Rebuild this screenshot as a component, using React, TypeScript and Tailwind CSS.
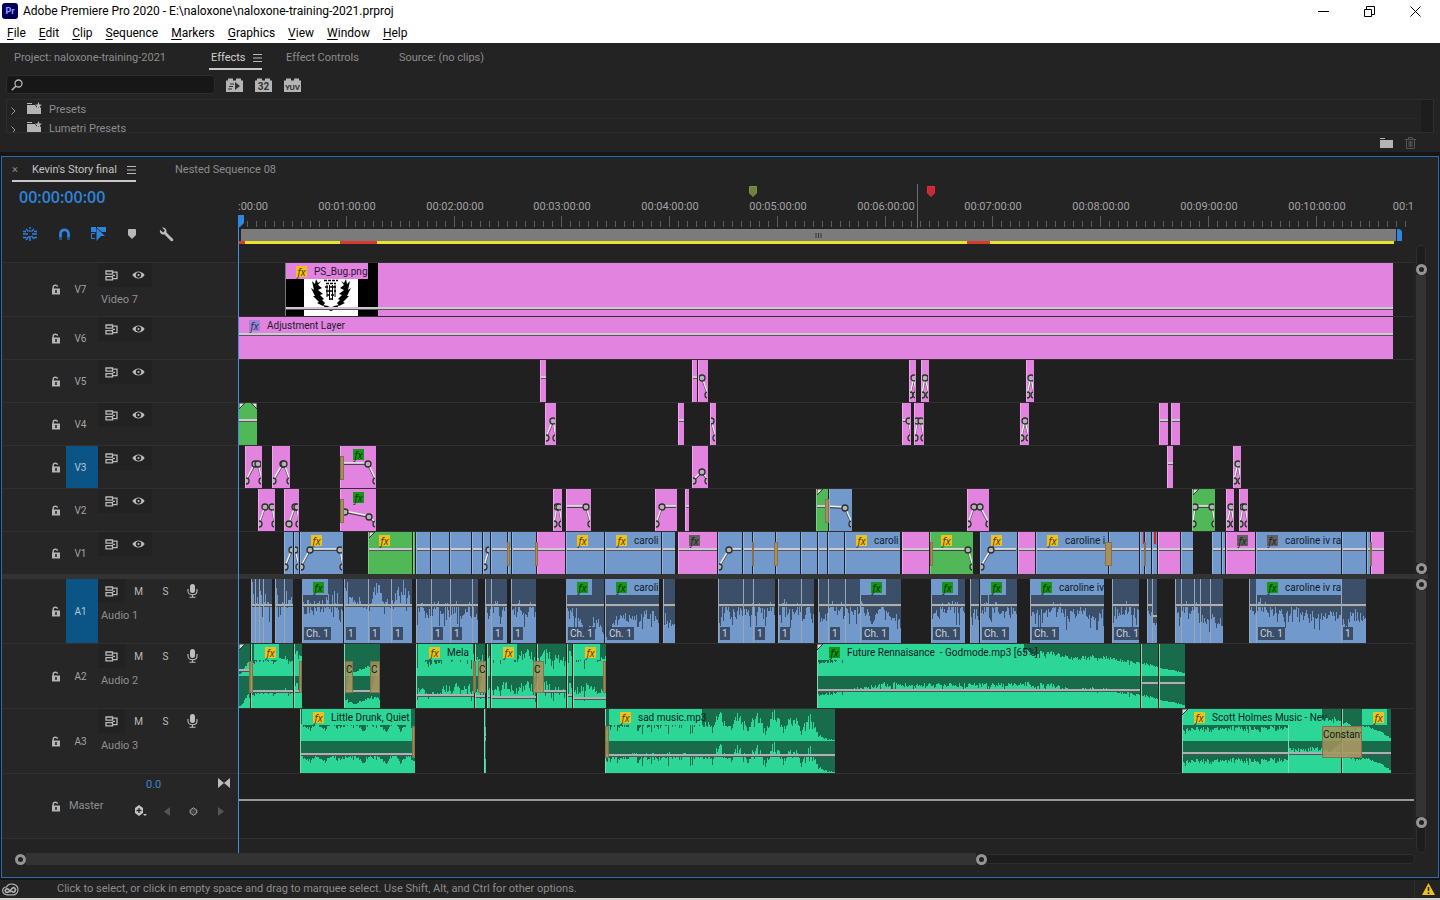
import { ReactNode } from 'react'
import clsx from 'clsx'

type Point = [number, number]
type FxKind = 'yellow' | 'green' | 'gray' | 'violet'
type ClipColor = 'pink' | 'blue' | 'green'

interface VideoClip {
  from: number
  to: number
  color?: ClipColor
  fx?: FxKind
  name?: string
  curve?: Point[]
  flat?: boolean
  line?: number
  corner?: boolean
  cornerEnd?: boolean
  afterTransition?: boolean
}

interface AudioClip {
  from: number
  to: number
  levels: number[]
  rough?: number
  fx?: FxKind
  name?: string
  header?: [number, number]
  badge?: string
  line?: number
  corner?: boolean
}

interface Transition {
  from: number
  to: number
  label?: string
}

// Timeline position of the left edge of the visible range
const VIEW_START = 238
const MINUTE = 107.75

const CLIP_COLORS: Record<ClipColor, string> = {
  pink: 'bg-[#e283e0] border-[#f0a4ee]',
  blue: 'bg-[#7199cc] border-[#90b2df]',
  green: 'bg-[#50b857] border-[#7ccf80]',
}

const FX_COLORS: Record<FxKind, string> = {
  yellow: 'bg-[#f0c01c] text-[#4a3800]',
  green: 'bg-[#159615] text-[#052c05]',
  gray: 'bg-[#5f5f5f] text-[#1c1c1c]',
  violet: 'bg-[#9a86d4] text-[#2a2550]',
}

const V5: VideoClip[] = [
  { from: 540, to: 546, flat: true },
  { from: 692, to: 697, flat: true },
  { from: 698, to: 708, curve: [[702, 17], [708, 34]] },
  { from: 909, to: 916, curve: [[910, 34], [914, 17], [916, 34]] },
  { from: 921, to: 929, curve: [[922, 34], [925, 17], [929, 34]] },
  { from: 1026, to: 1034, curve: [[1027, 34], [1031, 17], [1034, 34]] },
]

const V4: VideoClip[] = [
  { from: 238, to: 257, color: 'green', flat: true, corner: true, cornerEnd: true },
  { from: 545, to: 556, curve: [[546, 34], [553, 17], [556, 34]] },
  { from: 678, to: 684, flat: true },
  { from: 710, to: 716, curve: [[711, 17], [716, 34]] },
  { from: 902, to: 911, curve: [[902, 17], [909, 17], [911, 34]] },
  { from: 914, to: 924, curve: [[915, 34], [917, 17], [921, 17], [924, 34]] },
  { from: 1020, to: 1029, curve: [[1021, 34], [1025, 17], [1029, 34]] },
  { from: 1159, to: 1168, flat: true },
  { from: 1171, to: 1180, flat: true },
]

const V3: VideoClip[] = [
  { from: 245, to: 262, curve: [[246, 34], [255, 17], [258, 17], [262, 34]] },
  { from: 272, to: 290, curve: [[273, 34], [283, 17], [284, 17], [290, 34]] },
  { from: 340, to: 376, fx: 'green', afterTransition: true, curve: [[340, 17], [368, 17], [376, 34]] },
  { from: 692, to: 708, curve: [[693, 34], [702, 25], [708, 34]] },
  { from: 1167, to: 1173, flat: true },
  { from: 1233, to: 1241, curve: [[1234, 34], [1238, 17], [1241, 34]] },
]

const V2: VideoClip[] = [
  { from: 258, to: 275, curve: [[259, 34], [265, 17], [272, 17], [275, 34]] },
  { from: 284, to: 299, curve: [[289, 34], [295, 17], [297, 17], [299, 34]] },
  { from: 340, to: 376, fx: 'green', afterTransition: true, curve: [[345, 22], [369, 27], [376, 34]] },
  { from: 553, to: 562, curve: [[554, 34], [557, 17], [559, 17], [562, 34]] },
  { from: 566, to: 591, curve: [[566, 17], [586, 17], [591, 34]] },
  { from: 655, to: 677, curve: [[656, 34], [662, 17], [682, 17]] },
  { from: 685, to: 689, flat: true },
  { from: 816, to: 828, color: 'green', flat: true, corner: true },
  { from: 829, to: 852, color: 'blue', curve: [[825, 17], [845, 18], [852, 34]] },
  { from: 967, to: 989, curve: [[968, 34], [974, 17], [980, 17], [989, 34]] },
  { from: 1192, to: 1215, color: 'green', corner: true, curve: [[1193, 34], [1195, 17], [1212, 17], [1215, 34]] },
  { from: 1226, to: 1234, curve: [[1227, 34], [1231, 17], [1234, 34]] },
  { from: 1239, to: 1248, curve: [[1240, 34], [1243, 17], [1245, 17], [1248, 34]] },
]

const V1: VideoClip[] = [
  { from: 284, to: 293, color: 'blue', curve: [[285, 34], [292, 17], [297, 17]] },
  { from: 294, to: 299, color: 'blue', curve: [[295, 17], [299, 34]] },
  { from: 300, to: 343, color: 'blue', fx: 'yellow', curve: [[301, 34], [310, 17], [340, 17], [343, 34]] },
  { from: 368, to: 412, color: 'green', fx: 'yellow', flat: true, corner: true },
  { from: 413, to: 415, color: 'green', curve: [[414, 17], [415, 34]] },
  { from: 416, to: 430, color: 'blue', flat: true },
  { from: 431, to: 449, color: 'blue', flat: true },
  { from: 450, to: 471, color: 'blue', flat: true },
  { from: 472, to: 482, color: 'blue', flat: true },
  { from: 483, to: 490, color: 'blue', curve: [[484, 34], [489, 17]] },
  { from: 491, to: 507, color: 'blue', flat: true },
  { from: 508, to: 511, color: 'blue', flat: true },
  { from: 512, to: 536, color: 'blue', flat: true },
  { from: 537, to: 565, flat: true },
  { from: 566, to: 604, color: 'blue', fx: 'yellow', flat: true },
  { from: 605, to: 661, color: 'blue', fx: 'yellow', name: 'caroli', flat: true },
  { from: 662, to: 675, color: 'blue', flat: true },
  { from: 678, to: 717, fx: 'gray', flat: true },
  { from: 718, to: 742, color: 'blue', curve: [[719, 34], [729, 17], [747, 17]] },
  { from: 743, to: 752, color: 'blue', flat: true },
  { from: 753, to: 775, color: 'blue', flat: true },
  { from: 776, to: 800, color: 'blue', flat: true },
  { from: 801, to: 817, color: 'blue', flat: true },
  { from: 818, to: 827, color: 'blue', flat: true },
  { from: 828, to: 844, color: 'blue', flat: true },
  { from: 845, to: 900, color: 'blue', fx: 'yellow', name: 'caroli', flat: true },
  { from: 902, to: 929, flat: true },
  { from: 930, to: 973, color: 'green', fx: 'yellow', curve: [[926, 17], [968, 17], [973, 34]] },
  { from: 980, to: 1017, color: 'blue', fx: 'yellow', curve: [[981, 34], [991, 17], [1022, 17]] },
  { from: 1018, to: 1035, flat: true },
  { from: 1036, to: 1108, color: 'blue', fx: 'yellow', name: 'caroline i', flat: true },
  { from: 1109, to: 1139, color: 'blue', flat: true },
  { from: 1140, to: 1144, color: 'blue', flat: true },
  { from: 1145, to: 1151, color: 'blue', flat: true },
  { from: 1152, to: 1157, color: 'blue', flat: true },
  { from: 1158, to: 1180, flat: true },
  { from: 1181, to: 1193, color: 'blue', flat: true },
  { from: 1212, to: 1221, color: 'blue', flat: true },
  { from: 1222, to: 1225, color: 'blue', flat: true },
  { from: 1226, to: 1255, fx: 'gray', flat: true },
  { from: 1256, to: 1341, color: 'blue', fx: 'gray', name: 'caroline iv ra', flat: true },
  { from: 1342, to: 1366, color: 'blue', flat: true },
  { from: 1367, to: 1370, color: 'blue', flat: true },
  { from: 1371, to: 1384, flat: true },
]

const TALK = [0.5, 0.6, 0.42, 0.56, 0.45]

const A1: AudioClip[] = [
  { from: 251, to: 255, levels: [0.9, 0.5] },
  { from: 255, to: 259, levels: [0.8, 0.5] },
  { from: 259, to: 263, levels: [0.7, 0.6] },
  { from: 263, to: 272, levels: [0.8, 0.5, 0.6] },
  { from: 275, to: 284, levels: [0.9, 0.6, 0.5] },
  { from: 284, to: 293, levels: [0.7, 0.55] },
  { from: 302, to: 343, levels: [0.58, 0.54, 0.72, 0.55], rough: 0.5, fx: 'green', header: [302, 328], badge: 'Ch. 1' },
  { from: 344, to: 368, levels: [0.95, 0.6, 0.65, 0.55], rough: 0.3, badge: '1' },
  { from: 368, to: 391, levels: [0.6, 0.9, 0.65, 0.55], rough: 0.3, badge: '1' },
  { from: 391, to: 412, levels: [0.6, 0.9, 0.55], rough: 0.3, badge: '1' },
  { from: 416, to: 431, levels: TALK },
  { from: 431, to: 450, levels: TALK, badge: '1' },
  { from: 450, to: 472, levels: TALK, badge: '1' },
  { from: 472, to: 478, levels: [0.5, 0.35] },
  { from: 485, to: 491, levels: TALK },
  { from: 491, to: 507, levels: TALK, badge: '1' },
  { from: 511, to: 536, levels: TALK, badge: '1' },
  { from: 566, to: 604, levels: [0.5, 0.45, 0.2, 0.4, 0.1], fx: 'green', header: [566, 592], badge: 'Ch. 1' },
  { from: 605, to: 659, levels: [0.1, 0.45, 0.35, 0.45, 0.4], fx: 'green', name: 'caroli', header: [605, 659], badge: 'Ch. 1' },
  { from: 663, to: 675, levels: [0.5, 0.2] },
  { from: 718, to: 743, levels: TALK, badge: '1' },
  { from: 743, to: 753, levels: TALK },
  { from: 753, to: 775, levels: TALK, badge: '1' },
  { from: 778, to: 801, levels: TALK, badge: '1' },
  { from: 801, to: 814, levels: [0.35, 0.55, 0.4] },
  { from: 818, to: 828, levels: [0.5, 0.4] },
  { from: 828, to: 845, levels: TALK, badge: '1' },
  { from: 845, to: 860, levels: TALK },
  { from: 860, to: 901, levels: [0.6, 0.35, 0.5, 0.35, 0.45], fx: 'green', header: [860, 886], badge: 'Ch. 1' },
  { from: 931, to: 965, levels: [0.4, 0.55, 0.6, 0.45], fx: 'green', header: [931, 958], badge: 'Ch. 1' },
  { from: 970, to: 979, levels: [0.5, 0.4] },
  { from: 980, to: 1017, levels: [0.5, 0.7, 0.45, 0.5, 0.4], fx: 'green', header: [980, 1006], badge: 'Ch. 1' },
  { from: 1030, to: 1104, levels: [0.5, 0.45, 0.6, 0.4, 0.55, 0.35, 0.55], fx: 'green', name: 'caroline iv', header: [1030, 1104], badge: 'Ch. 1' },
  { from: 1112, to: 1139, levels: [0.5, 0.55, 0.45], badge: 'Ch. 1' },
  { from: 1147, to: 1152, levels: [0.5, 0.4] },
  { from: 1152, to: 1157, levels: [0.3, 0.4], line: 36 },
  { from: 1175, to: 1181, levels: [0.6, 0.4] },
  { from: 1181, to: 1194, levels: TALK },
  { from: 1194, to: 1200, levels: TALK },
  { from: 1200, to: 1210, levels: [0.4, 0.3] },
  { from: 1210, to: 1223, levels: [0.4, 0.3] },
  { from: 1249, to: 1256, levels: [0.5, 0.4] },
  { from: 1256, to: 1341, levels: [0.65, 0.5, 0.45, 0.5, 0.45, 0.4, 0.42, 0.4], fx: 'green', name: 'caroline iv ra', header: [1256, 1341], badge: 'Ch. 1' },
  { from: 1341, to: 1366, levels: [0.3, 0.5, 0.4, 0.4], badge: '1' },
]

const A2: AudioClip[] = [
  { from: 238, to: 250, levels: [0.05, 0.5], line: 25, corner: true },
  { from: 251, to: 293, levels: [0.4, 0.5, 0.45, 0.6, 0.4], rough: 0.25, fx: 'yellow', header: [254, 279], line: 46 },
  { from: 294, to: 302, levels: [0.7, 0.55], line: 46 },
  { from: 344, to: 380, levels: [0.3, 0.1, 0.25, 0.35, 0.3], line: 46 },
  { from: 416, to: 474, levels: [0.6, 0.4, 0.6, 0.7, 0.55], rough: 0.5, fx: 'yellow', name: 'Mela', header: [418, 473], line: 50 },
  { from: 475, to: 485, levels: [0.5, 0.6], line: 51 },
  { from: 487, to: 490, levels: [0.5, 0.6], line: 51 },
  { from: 491, to: 536, levels: [0.45, 0.7, 0.55, 0.7, 0.5], rough: 0.5, fx: 'yellow', header: [492, 517], line: 52 },
  { from: 537, to: 566, levels: [0.6, 0.7, 0.55, 0.6], rough: 0.5, line: 46 },
  { from: 567, to: 572, levels: [0.7, 0.6], line: 50 },
  { from: 573, to: 606, levels: [0.5, 0.65, 0.55, 0.6], rough: 0.5, fx: 'yellow', header: [574, 600], line: 53 },
  { from: 817, to: 1140, levels: [0.4, 0.5, 0.65, 0.74, 0.72, 0.74, 0.72, 0.72, 0.72, 0.74, 0.72, 0.55, 0.62, 0.5, 0.4], rough: 0.2, fx: 'green', name: 'Future Rennaisance  - Godmode.mp3 [65%]', header: [818, 1024], line: 45, corner: true },
  { from: 1141, to: 1158, levels: [0.4, 0.28], rough: 0.15, line: 38 },
  { from: 1159, to: 1185, levels: [0.25, 0.18, 0.08], rough: 0.1, line: 38 },
]

const A3: AudioClip[] = [
  { from: 300, to: 415, levels: [0.5, 0.4, 0.52, 0.38, 0.55, 0.42, 0.5, 0.55, 0.35, 0.52, 0.55, 0.3, 0.6, 0.4, 0.55, 0.3], rough: 0.25, fx: 'yellow', name: 'Little Drunk, Quiet', header: [302, 411], line: 44 },
  { from: 484, to: 486, levels: [0.5, 0.5] },
  {
    from: 605,
    to: 835,
    levels: [0.4, 0.48, 0.5, 0.52, 0.5, 0.54, 0.5, 0.55, 0.5, 0.56, 0.5, 0.55, 0.5, 0.8, 0.4, 0.8, 0.35, 0.8, 0.35, 0.85, 0.35, 0.8, 0.35, 0.75, 0.2, 0.06, 0.02],
    rough: 0.45,
    fx: 'yellow',
    name: 'sad music.mp3',
    header: [609, 702],
    line: 45,
  },
  { from: 1182, to: 1288, levels: [0.35, 0.4, 0.38, 0.42, 0.4, 0.42, 0.4], rough: 0.3, fx: 'yellow', name: 'Scott Holmes Music - Nev', header: [1183, 1322], line: 43, corner: true },
  { from: 1288, to: 1341, levels: [0.75, 0.72, 0.75, 0.7, 0.65], rough: 0.2, line: 43 },
  { from: 1342, to: 1391, levels: [0.6, 0.45, 0.45, 0.3, 0.05], rough: 0.15, fx: 'yellow', header: [1362, 1387], line: 43 },
]

const VIDEO_TRANSITIONS: Record<string, Transition[]> = {
  V3: [{ from: 340, to: 344 }],
  V2: [{ from: 340, to: 344 }, { from: 825, to: 829 }],
  V1: [
    { from: 507, to: 510 },
    { from: 535, to: 538 },
    { from: 752, to: 754 },
    { from: 774, to: 778 },
    { from: 930, to: 933 },
    { from: 1105, to: 1112 },
    { from: 1144, to: 1146 },
    { from: 1370, to: 1372 },
  ],
}

const AUDIO_TRANSITIONS: Record<string, Transition[]> = {
  A2: [
    { from: 249, to: 253 },
    { from: 299, to: 302 },
    { from: 345, to: 353, label: 'C' },
    { from: 370, to: 380, label: 'C' },
    { from: 473, to: 476 },
    { from: 478, to: 486, label: 'C' },
    { from: 533, to: 544, label: 'C' },
    { from: 603, to: 606 },
  ],
  A3: [
    { from: 412, to: 415 },
    { from: 605, to: 609 },
    { from: 1322, to: 1362, label: 'Constant' },
  ],
}

const VIDEO_TRACKS = [
  { id: 'V5', clips: V5 },
  { id: 'V4', clips: V4 },
  { id: 'V3', clips: V3 },
  { id: 'V2', clips: V2 },
  { id: 'V1', clips: V1 },
]

const span = (from: number, to: number) => ({ left: from - VIEW_START, width: to - from })

function wavePath(width: number, height: number, levels: number[], rough: number, seed: number) {
  let state = seed * 7919 + 17
  const random = () => {
    state = (state * 1103515245 + 12345) % 2147483648
    return state / 2147483648
  }
  let d = `M0 ${height}`
  for (let x = 0; x < width; x++) {
    const pos = (x / width) * (levels.length - 1)
    const i = Math.floor(pos)
    const level = levels[i] + ((levels[i + 1] ?? levels[i]) - levels[i]) * (pos - i)
    const dip = random() < 0.14 ? rough * 0.8 : 0
    const amp = Math.max(0.02, level * (1 + (random() - 0.5) * rough - dip))
    d += `V${Math.round(height - amp * height)}H${x + 1}`
  }
  return d + `V${height}Z`
}

function Fx({ kind }: { kind: FxKind }) {
  return (
    <span className={clsx("flex h-[11px] w-[11px] shrink-0 items-center justify-center font-['Open_Sans'] text-[10px] leading-none italic", FX_COLORS[kind])}>
      fx
    </span>
  )
}

function Corner({ end }: { end?: boolean }) {
  return (
    <svg className={clsx('absolute top-0', end ? 'right-0' : 'left-0')} width="6" height="6" viewBox="0 0 6 6">
      <path d={end ? 'M0 0H6V6Z' : 'M0 0H6L0 6Z'} fill="#ddd" stroke="#333" strokeWidth="1" />
    </svg>
  )
}

function LevelLine({ top, audio }: { top: number; audio?: boolean }) {
  return (
    <div
      className={clsx('absolute inset-x-0 h-[3px] border-b border-[#3a3a3a]/80', audio ? 'bg-[#a9b1b3]' : 'bg-[#cdc8d2]')}
      style={{ top }}
    />
  )
}

function VideoClipView({ clip }: { clip: VideoClip }) {
  const { from, to, color = 'pink', fx, name, curve, flat, line = 16, corner, cornerEnd, afterTransition } = clip
  return (
    <div className={clsx('absolute inset-y-0 overflow-hidden border-l', CLIP_COLORS[color])} style={span(from, to)}>
      {flat && <LevelLine top={line} />}
      {curve && (
        <svg className="absolute inset-y-0 -left-px h-full w-full">
          <polyline points={curve.map(([x, y]) => `${x - from},${y + 1}`).join(' ')} fill="none" stroke="#444" strokeWidth="2" />
          <polyline points={curve.map(([x, y]) => `${x - from},${y}`).join(' ')} fill="none" stroke="#f0f0f0" strokeWidth="1.5" />
          {curve.filter(([x]) => x > from).map(([x, y]) => (
            <circle key={`${x}-${y}`} cx={x - from} cy={y + 1} r="3" fill="#b4b4b4" stroke="#2e2e2e" strokeWidth="1.3" />
          ))}
        </svg>
      )}
      {corner && <Corner />}
      {cornerEnd && <Corner end />}
      {fx && (
        <div
          className={clsx(
            'relative flex h-4 items-center gap-[7px] pt-px text-[10px] whitespace-nowrap text-[#16202c]',
            afterTransition ? 'pl-3' : 'pl-[10px]',
          )}
        >
          <Fx kind={fx} />
          {name}
        </div>
      )}
    </div>
  )
}

function AudioClipView({ clip, stereo }: { clip: AudioClip; stereo?: boolean }) {
  const { from, to, levels, rough = 0.4, fx, name, header, badge, line = 25, corner } = clip
  const width = to - from
  const channelHeight = stereo ? 32 : 64
  return (
    <>
      <div
        className={clsx(
          'absolute inset-y-0 overflow-hidden border-l',
          stereo ? 'border-[#7fd8b4] bg-[#186b4b]' : 'border-[#9aa6b6] bg-[#3c4f69]',
        )}
        style={span(from, to)}
      >
        {(stereo ? [0, 1] : [0]).map((channel) => (
          <svg key={channel} className={clsx('block', stereo ? 'h-8' : 'h-16')} width={width}>
            <path
              d={wavePath(width, channelHeight, levels, rough, from)}
              className={stereo ? 'fill-[#2bd697]' : 'fill-[#7199cc]'}
            />
          </svg>
        ))}
        <LevelLine top={line} audio />
        {corner && <Corner />}
        {badge && (
          <span className="absolute bottom-[3px] left-px bg-[#34465e]/90 px-[2px] text-[10px] leading-[13px] whitespace-nowrap text-[#cdd4de]">
            {badge}
          </span>
        )}
      </div>
      {header && fx && (
        <div
          className={clsx(
            'absolute top-0 z-10 flex h-4 items-center gap-[7px] pt-px pl-[11px] text-[10px] whitespace-pre text-[#0d1a22]',
            stereo ? 'bg-[#2bd697]' : 'bg-[#7199cc]',
          )}
          style={span(header[0], header[1])}
        >
          <Fx kind={fx} />
          {name}
        </div>
      )}
      {header && corner && (
        <div className="absolute top-0 z-10" style={span(from, from + 7)}>
          <Corner />
        </div>
      )}
    </>
  )
}

function TransitionView({ item, audio }: { item: Transition; audio?: boolean }) {
  return (
    <div
      className={clsx(
        'absolute z-10 overflow-hidden border border-[#8a6f4c] text-[10px] leading-4 text-[#17170f]',
        audio ? 'top-[17px] h-8 bg-[#a39259]/85' : 'top-[10px] h-6 bg-[#a8905a]',
      )}
      style={span(item.from, item.to)}
    >
      {item.label && (
        <svg className="absolute inset-0 h-full w-full" viewBox="0 0 10 30" preserveAspectRatio="none">
          <path d="M0 30L10 0V30Z" fill="#b0a070" fillOpacity="0.4" />
        </svg>
      )}
      {item.label && <span className="relative">{item.label}</span>}
    </div>
  )
}

function CrestThumbnail() {
  return (
    <svg className="absolute top-0 left-0" width="92" height="53" viewBox="0 0 92 53">
      <rect width="92" height="53" fill="#000" />
      <rect x="18" y="16" width="54" height="37" fill="#fff" />
      <path
        d="M30 16L29 21L26 18L28 27L25 25L29 33L27 33L33 39L31 40L37 43L39 40L36 37L38 36L34 32L37 31L32 27L36 25L32 22L35 18L32 20ZM60 16L61 21L64 18L62 27L65 25L61 33L63 33L57 39L59 40L53 43L51 40L54 37L52 36L56 32L53 31L58 27L54 25L58 22L55 18L58 20Z"
        fill="#000"
      />
      <path d="M38 17.500H52M40 20.500H50M39 24H51M40 28H50M41 32H49M43 36H47" stroke="#000" strokeWidth="1.500" strokeDasharray="3 1" />
      <path d="M41 22V34M43.500 22V37M46.500 22V37M49 22V34" fill="none" stroke="#000" />
      <path d="M37 42L42 43L45 45L48 43L53 42L50 46L45 48L40 46Z" fill="#000" />
    </svg>
  )
}

function LockIcon() {
  return (
    <svg width="10" height="11" viewBox="0 0 10 11">
      <path d="M2.2 5V3.2C2.2 .6 6.4 .6 6.4 2.8" fill="none" stroke="#b4b4b4" strokeWidth="1.4" />
      <path fillRule="evenodd" fill="#b4b4b4" d="M1 4.5H9V10.5H1ZM4.2 6V9H5.8V6Z" />
    </svg>
  )
}

function SyncIcon() {
  return (
    <svg width="13" height="11" viewBox="0 0 13 11" fill="none" stroke="#b9b9b9" strokeWidth="1.3">
      <path d="M1 1H7.500V4.200H1ZM1 6.600H7.500V9.800H1Z" />
      <path d="M7.500 2.200H12V8.600H7.500" />
      <path d="M7.500 5.400H10" />
    </svg>
  )
}

function EyeIcon() {
  return (
    <svg width="13" height="10" viewBox="0 0 13 10">
      <path d="M.3 5C3.5 .2 9.5 .2 12.7 5C9.5 9.8 3.5 9.800 .3 5Z" fill="#bdbdbd" />
      <circle cx="6.5" cy="5" r="2.7" fill="#222" />
      <circle cx="6.5" cy="5" r="1.1" fill="#bdbdbd" />
    </svg>
  )
}

function MicIcon() {
  return (
    <svg width="11" height="14" viewBox="0 0 11 14">
      <rect x="3" y="0" width="5" height="9" rx="2.5" fill="#bdbdbd" />
      <path d="M1 5V7C1 12 10 12 10 7V5M5.5 10.5V13M2.5 13.2H8.5" fill="none" stroke="#bdbdbd" strokeWidth="1.1" />
    </svg>
  )
}

function TrackHeader({ id, name, active, audio, className }: { id: string; name?: string; active?: boolean; audio?: boolean; className: string }) {
  return (
    <div className={clsx('flex shrink-0 bg-[#262626]', className)}>
      <button aria-label={`Lock ${id}`} className="flex w-16 items-center justify-end pr-[5px]">
        <LockIcon />
      </button>
      <button className={clsx('w-8 pr-[3px] text-[10px]', active ? 'bg-[#0a5586] text-[#b9c7d2]' : 'text-[#a4a4a4]')}>{id}</button>
      <div className="flex-1">
        <div className="flex h-6">
          <button aria-label="Sync lock" className="flex w-[27px] items-center justify-center bg-[#222]"><SyncIcon /></button>
          {audio ? (
            <>
              <button className="w-[27px] text-[10px] text-[#bdbdbd]">M</button>
              <button className="w-[27px] text-[10px] text-[#bdbdbd]">S</button>
              <button aria-label="Voice-over record" className="flex w-[27px] items-center justify-center"><MicIcon /></button>
            </>
          ) : (
            <button aria-label="Toggle track output" className="flex w-[27px] items-center justify-center bg-[#222]"><EyeIcon /></button>
          )}
        </div>
        {name && <div className="pl-[3px] text-[11px] leading-[26px] text-[#8f8f8f]">{name}</div>}
      </div>
    </div>
  )
}

function MasterHeader() {
  return (
    <div className="flex h-[66px] shrink-0 border-y border-[#303030] bg-[#262626]">
      <button aria-label="Lock master" className="flex w-16 items-center justify-end pr-[5px]"><LockIcon /></button>
      <div className="flex w-[60px] items-center pl-[3px] text-[11px] text-[#8f8f8f]">Master</div>
      <div className="flex flex-1 flex-col">
        <div className="flex h-[22px] items-center justify-between pr-2 pl-5 text-[11px] text-[#3a85d8]">
          0.0
          <svg className="mb-1" width="12" height="10" viewBox="0 0 12 10" fill="#bdbdbd"><path d="M0 0L6 5L0 10ZM12 0L6 5L12 10Z" /></svg>
        </div>
        <div className="flex h-[30px] items-center">
          <button aria-label="Keyframe type" className="flex w-[27px] justify-center pl-px">
            <svg width="13" height="12" viewBox="0 0 13 12">
              <path d="M5 0L9 3V8L5 11L1 8V3Z" fill="#c4c4c4" />
              <path d="M5 3V8M2.5 5.5H7.5" stroke="#262626" strokeWidth="1.3" />
              <path d="M9 9H13L11 11Z" fill="#c4c4c4" />
            </svg>
          </button>
          <button aria-label="Previous keyframe" className="flex w-[27px] justify-center"><svg width="6" height="9"><path d="M6 0V9L0 4.500Z" fill="#555" /></svg></button>
          <button aria-label="Add keyframe" className="flex w-[27px] justify-center">
            <svg width="9" height="9" viewBox="0 0 9 9"><path d="M4.5 .8L7.8 3V6L4.5 8.300L1.200 6V3Z" fill="#444" stroke="#a4a4a4" /></svg>
          </button>
          <button aria-label="Next keyframe" className="flex w-[27px] justify-center"><svg width="6" height="9"><path d="M0 0V9L6 4.500Z" fill="#555" /></svg></button>
        </div>
      </div>
    </div>
  )
}

function Ruler() {
  const minutes = Array.from({ length: 10 }, (_, i) => i + 1)
  const ticks = Array.from({ length: 132 }, (_, i) => i)
  return (
    <div className="relative h-[79px] shrink-0 overflow-hidden">
      <div className="relative h-4">
        <svg className="absolute top-[3px]" style={{ left: 749 - VIEW_START }} width="8" height="11"><path d="M.5 .5H7.500V7L4 10.500L.5 7Z" fill="#6f8238" stroke="#7c9142" /></svg>
        <svg className="absolute top-[3px]" style={{ left: 927 - VIEW_START }} width="8" height="11"><path d="M.5 .5H7.500V7L4 10.500L.5 7Z" fill="#c62a32" stroke="#d8343c" /></svg>
        <div className="absolute top-px h-11 w-px bg-[#6e6e6e]" style={{ left: 917 - VIEW_START }} />
      </div>
      <div className="relative h-[17px] text-[11px] leading-4 text-[#a2a2a2]">
        <span className="absolute left-0">:00:00</span>
        {minutes.map((m) => (
          <span key={m} className="absolute -translate-x-1/2" style={{ left: Math.round(m * MINUTE) + 1 }}>
            {`00:${String(m).padStart(2, '0')}:00:00`}
          </span>
        ))}
        <span className="absolute right-0">00:1</span>
      </div>
      <svg className="block h-[13px] w-full">
        {ticks.map((t) => (
          <rect key={t} x={Math.round((t * MINUTE) / 12)} y={t % 12 === 0 ? 0 : 5} width="1" height={t % 12 === 0 ? 11 : 6} fill="#5c5c5c" />
        ))}
      </svg>
      <div className="flex h-3 gap-px pl-[3px]">
        <div className="flex items-center justify-center bg-[#7b7b7b] text-[#333]" style={{ width: 1396 - 241 }}>
          <svg width="7" height="5"><path d="M1 0V5M3.500 0V5M6 0V5" stroke="#333" /></svg>
        </div>
        <div className="w-[5px] rounded-tr-sm bg-[#2d86e0]" />
      </div>
      <div className="relative h-[3px]">
        <div className="absolute inset-y-0 bg-[#e9e32c]" style={span(238, 1394)} />
        <div className="absolute inset-y-0 bg-[#d83a2c]" style={span(238, 245)} />
        <div className="absolute inset-y-0 bg-[#d83a2c]" style={span(340, 377)} />
        <div className="absolute inset-y-0 bg-[#d83a2c]" style={span(967, 990)} />
      </div>
    </div>
  )
}

function Lane({ className, children }: { className: string; children?: ReactNode }) {
  return <div className={clsx('relative shrink-0 overflow-hidden border-[#303030] bg-[#202020]', className)}>{children}</div>
}

function Handle({ label }: { label: string }) {
  return <button aria-label={label} className="block h-[11px] w-[11px] shrink-0 rounded-full border-[3px] border-[#959595] bg-[#222]" />
}

function MenuLines() {
  return (
    <svg width="9" height="8" viewBox="0 0 9 8"><path d="M0 .5H9M0 4H9M0 7.500H9" stroke="#b9b9b9" /></svg>
  )
}

function TimelinePanel() {
  return (
    <section className="mx-px flex flex-1 flex-col border border-[#2b6cb0] bg-[#232323]">
      <div className="flex h-[26px] items-start text-[11px] text-[#8c8c8c]">
        <div className="ml-[10px] flex h-[25px] w-[124px] items-center justify-between border-b-2 border-[#c8c8c8] pt-[3px]">
          <button aria-label="Close sequence">×</button>
          <button className="pl-1 whitespace-nowrap text-[#c4c4c4]">Kevin's Story final</button>
          <button aria-label="Panel menu"><MenuLines /></button>
        </div>
        <button className="ml-[39px] h-[26px]">Nested Sequence 08</button>
      </div>
      <div className="flex">
        <div className="flex w-[236px] shrink-0 flex-col">
          <div className="h-[79px] shrink-0">
            <div className="pl-[17px] font-['Open_Sans'] text-base leading-7 font-semibold text-[#2f83dc]">00:00:00:00</div>
            <div className="flex h-[46px] items-center">
              <button aria-label="Insert as nest" className="ml-[11px] flex w-[34px] justify-center">
                <svg width="16" height="14" viewBox="0 0 16 14" stroke="#2f83dc" strokeWidth="1.4">
                  <path d="M8 0V2M8 3V5M8 9V14M1 7H6M10 7H15M4 2L6.500 4.500M12 2L9.500 4.500M1 10.500H4.500M4 13L7 9.500M9.500 9L12 12M12 10.500H15M1 4.500H4M12 4.500H15" />
                </svg>
              </button>
              <button aria-label="Snap" className="flex w-[34px] justify-center">
                <svg width="13" height="12" viewBox="0 0 13 12" fill="none" strokeWidth="2.800">
                  <path d="M2.500 10V6C2.500 .5 10.500 .5 10.500 6V10" stroke="#2f83dc" />
                  <path d="M2.500 9V12M10.500 9V12" stroke="#1f5796" />
                </svg>
              </button>
              <button aria-label="Linked selection" className="flex w-[34px] justify-center">
                <svg width="15" height="14" viewBox="0 0 15 14">
                  <path d="M0 0H5V5H0ZM6 0H15V5H11L6 1Z" fill="#2f83dc" />
                  <path d="M4 6.500H.5V11.500H4" stroke="#2f83dc" fill="none" />
                  <path d="M5.500 1L14 9H10L5.500 14Z" fill="#2f83dc" />
                </svg>
              </button>
              <button aria-label="Add marker" className="flex w-[34px] justify-center">
                <svg width="8" height="10"><path d="M0 1Q0 0 1 0H7Q8 0 8 1V6L4 10L0 6Z" fill="#b8b8b8" /></svg>
              </button>
              <button aria-label="Timeline settings" className="flex w-[34px] justify-center">
                <svg width="15" height="15" viewBox="0 0 15 15"><path d="M3 .5L6 3.500L4 5.500L1 2.700C.3 6 2.500 8 5.500 7.500L12 14C13.500 15 15 13.500 14 12L7.500 5.500C8 2.500 6 .2 3 .5Z" fill="#bdbdbd" /></svg>
              </button>
            </div>
          </div>
          <TrackHeader id="V7" name="Video 7" className="h-[54px] border-t border-[#303030]" />
          <TrackHeader id="V6" className="h-[43px] border-t border-[#303030]" />
          {VIDEO_TRACKS.map(({ id }) => (
            <TrackHeader key={id} id={id} active={id === 'V3'} className="h-[43px] border-t border-[#303030]" />
          ))}
          <div className="h-[5px] shrink-0 bg-[#333]" />
          <TrackHeader id="A1" name="Audio 1" audio active className="h-16" />
          <TrackHeader id="A2" name="Audio 2" audio className="h-[65px] border-t border-[#303030]" />
          <TrackHeader id="A3" name="Audio 3" audio className="h-[65px] border-t border-[#303030]" />
          <MasterHeader />
        </div>

        <div className="relative min-w-0 flex-1 overflow-hidden">
          <Ruler />
          <Lane className="h-[54px] border-t">
            <div className="absolute inset-y-0 border-l border-[#777] bg-[#e283e0]" style={span(285, 1393)}>
              <CrestThumbnail />
              <div className="absolute top-0 left-0 flex h-4 w-[82px] items-center gap-[7px] bg-[#e283e0] pt-px pl-[10px] text-[10px] text-[#2a1530]">
                <Fx kind="yellow" />
                PS_Bug.png
              </div>
              <LevelLine top={44} />
            </div>
          </Lane>
          <Lane className="h-[43px] border-t">
            <VideoClipView clip={{ from: 238, to: 1393, fx: 'violet', name: 'Adjustment Layer', flat: true }} />
          </Lane>
          {VIDEO_TRACKS.map(({ id, clips }) => (
            <Lane key={id} className="h-[43px] border-t">
              {clips.map((clip) => <VideoClipView key={clip.from} clip={clip} />)}
              {VIDEO_TRANSITIONS[id]?.map((item) => <TransitionView key={item.from} item={item} />)}
              {id === 'V1' && (
                <>
                  <div className="absolute top-0 h-3 w-[2px] bg-[#d42020]" style={{ left: 1154 - VIEW_START }} />
                  <div className="absolute top-0 h-3 w-px bg-[#d42020]" style={{ left: 1143 - VIEW_START }} />
                </>
              )}
            </Lane>
          ))}
          <div className="h-[5px] bg-[#333]" />
          <Lane className="h-16">
            {A1.map((clip) => <AudioClipView key={clip.from} clip={clip} />)}
          </Lane>
          <Lane className="h-[65px] border-t">
            {A2.map((clip) => <AudioClipView key={clip.from} clip={clip} stereo />)}
            {AUDIO_TRANSITIONS.A2.map((item) => <TransitionView key={item.from} item={item} audio />)}
          </Lane>
          <Lane className="h-[65px] border-t">
            {A3.map((clip) => <AudioClipView key={clip.from} clip={clip} stereo />)}
            {AUDIO_TRANSITIONS.A3.map((item) => <TransitionView key={item.from} item={item} audio />)}
          </Lane>
          <Lane className="h-[66px] border-y pt-[25px]">
            <div className="h-[2px] bg-[#989898]" />
          </Lane>
          <div className="h-[14px]" />
          {/* Playhead */}
          <div className="absolute top-8 bottom-0 left-0 z-20 w-px bg-[#3f8fe6]">
            <svg width="6" height="12"><path d="M0 0H6V8L2 12H0Z" fill="#2d86e0" /></svg>
          </div>
        </div>

        <div className="flex w-6 shrink-0 flex-col pt-[62px]">
          <div className="flex h-[329px] w-[14px] shrink-0 flex-col items-center">
            <div className="h-[19px] w-[10px] rounded-t-full border border-b-0 border-[#2e2e2e] bg-[#1d1d1d]" />
            <Handle label="Video tracks top handle" />
            <div className="w-[10px] flex-1 bg-[#333]" />
            <Handle label="Video tracks bottom handle" />
          </div>
          <div className="h-[5px] w-[14px] shrink-0 bg-[#333]" />
          <div className="flex w-[14px] flex-1 flex-col items-center">
            <Handle label="Audio tracks top handle" />
            <div className="w-[10px] flex-1 bg-[#333]" />
            <Handle label="Audio tracks bottom handle" />
            <div className="h-[25px] w-[10px] rounded-b-full border border-t-0 border-[#2e2e2e] bg-[#1d1d1d]" />
          </div>
        </div>
      </div>
      <div className="mr-[23px] ml-[13px] flex h-3 items-center">
        <Handle label="Zoom start handle" />
        <div className="h-full flex-[950] bg-[#333]" />
        <Handle label="Zoom end handle" />
        <div className="h-[10px] flex-[427] rounded-r-full border border-l-0 border-[#2e2e2e] bg-[#1d1d1d]" />
      </div>
    </section>
  )
}

function BrickButton({ label, children }: { label: string; children: ReactNode }) {
  return (
    <button aria-label={label}>
      <svg width="17" height="14" viewBox="0 0 17 14">
        <path d="M0 2.500H2V.5H7V2.500H10V.5H15V2.500H17V14H0Z" fill="#b4b4b4" />
        {children}
      </svg>
    </button>
  )
}

function BinRow({ name }: { name: string }) {
  return (
    <div className="flex h-[19px] shrink-0 items-center border-b border-[#282828] pt-[3px] text-[11px] text-[#8c8c8c]">
      <svg className="ml-1" width="5" height="8"><path d="M.5 .5L4 4L.5 7.500" fill="none" stroke="#999" /></svg>
      <svg className="mb-1 ml-[11px]" width="15" height="13" viewBox="0 0 15 13">
        <path d="M0 1H5V2H0ZM0 3H8L10 6H14V12H0Z" fill="#b4b4b4" />
        <path d="M11.500 0L12.500 2.500L15 2.700L13 4.300L13.800 7L11.500 5.500L9.200 7L10 4.300L8 2.700L10.500 2.500Z" fill="#b4b4b4" />
      </svg>
      <span className="ml-[7px]">{name}</span>
    </div>
  )
}

function EffectsPanel() {
  return (
    <section className="flex h-[109px] shrink-0 flex-col bg-[#232323]">
      <nav className="flex h-[27px] items-stretch pt-[3px] text-[11px] text-[#8c8c8c]">
        <button className="ml-[14px] w-[155px] text-left whitespace-nowrap">Project: naloxone-training-2021</button>
        <div className="ml-10 flex w-[53px] items-center justify-between border-b-2 border-[#c8c8c8] pt-[2px] pl-[2px] text-[#d0d0d0]">
          <button>Effects</button>
          <MenuLines />
        </div>
        <button className="ml-6 w-[71px] text-left whitespace-nowrap">Effect Controls</button>
        <button className="ml-[42px] whitespace-nowrap">Source: (no clips)</button>
      </nav>
      <div className="flex h-[29px] items-center pl-[6px]">
        <label className="flex h-[19px] w-[209px] items-center rounded-sm border border-[#2c2c2c] bg-[#171717] pl-1">
          <svg width="12" height="12" viewBox="0 0 12 12" fill="none" stroke="#b4b4b4"><circle cx="7.500" cy="4.500" r="3.500" strokeWidth="1.300" /><path d="M5 7L.8 11.200" strokeWidth="1.600" /></svg>
          <input aria-label="Search effects" className="min-w-0 flex-1 bg-transparent px-1 text-[11px] text-[#b4b4b4] outline-none" />
        </label>
        <div className="ml-[11px] flex gap-3">
          <BrickButton label="Accelerated effects">
            <path d="M9 4V12L14 8Z" fill="#333" />
            <path d="M4 6H8M3 8.500H7M2 11H6" stroke="#333" />
          </BrickButton>
          <BrickButton label="32-bit color effects">
            <text x="8.500" y="12" textAnchor="middle" fontSize="10" fontWeight="bold" fill="#333">32</text>
          </BrickButton>
          <BrickButton label="YUV effects">
            <text x="8.500" y="12" textAnchor="middle" fontSize="8" fontWeight="bold" fill="#333">YUV</text>
          </BrickButton>
        </div>
      </div>
      <div className="mr-[6px] ml-[6px] flex h-[34px] border border-[#2e2e2e]">
        <div className="flex flex-1 flex-col overflow-hidden">
          <BinRow name="Presets" />
          <BinRow name="Lumetri Presets" />
        </div>
        <div className="w-3 bg-[#1d1d1d]" />
      </div>
      <div className="flex flex-1 items-center justify-end gap-3 pr-6">
        <button aria-label="New custom bin"><svg width="13" height="10"><path d="M0 0H5V1H0ZM0 2H13V10H0Z" fill="#b4b4b4" /></svg></button>
        <button aria-label="Delete custom item">
          <svg width="11" height="12" viewBox="0 0 11 12" fill="none" stroke="#555"><path d="M0 2.500H11M3.500 2V.5H7.500V2M1.500 3V11.500H9.500V3M4 4V10M5.500 4V10M7 4V10" /></svg>
        </button>
      </div>
    </section>
  )
}

const MENUS = ['File', 'Edit', 'Clip', 'Sequence', 'Markers', 'Graphics', 'View', 'Window', 'Help']

function WindowChrome() {
  return (
    <header className="shrink-0 bg-white text-black">
      <div className="flex h-[22px] items-center pl-[2px] text-xs">
        <span className="flex h-4 w-4 items-center justify-center rounded-[3px] bg-[#00005b] text-[9px] font-bold text-[#9c9cff]">Pr</span>
        <h1 className="ml-[5px] flex-1">Adobe Premiere Pro 2020 - E:\naloxone\naloxone-training-2021.prproj</h1>
        <div className="flex gap-[35px] pr-[19px]">
          <button aria-label="Minimize"><svg width="11" height="11"><path d="M0 5.500H11" stroke="#000" /></svg></button>
          <button aria-label="Restore"><svg width="11" height="11" fill="none" stroke="#000"><path d="M.5 3.500H7.500V10.500H.5ZM2.500 3.500V.5H10.500V8.500H7.500" /></svg></button>
          <button aria-label="Close"><svg width="11" height="11"><path d="M.5 .5L10.500 10.500M10.500 .5L.5 10.500" stroke="#000" /></svg></button>
        </div>
      </div>
      <nav className="flex h-[21px] items-center gap-[13px] pl-[7px] text-xs">
        {MENUS.map((menu) => (
          <button key={menu}>
            <span className="underline underline-offset-2">{menu[0]}</span>
            {menu.slice(1)}
          </button>
        ))}
      </nav>
    </header>
  )
}

function StatusBar() {
  return (
    <footer className="flex h-[18px] shrink-0 items-center bg-[#232323] text-[11px] text-[#8c8c8c]">
      <svg className="ml-[2px]" width="17" height="13" viewBox="0 0 17 13" fill="none" stroke="#b0b0b0">
        <path d="M5 11.800C-1 11 -.5 4 4.500 4C6.500 -.5 15.500 0 16 6.500C16 10 13.500 12 11 11.900H5" strokeWidth="1.200" />
        <path d="M9 9L6.500 6.500C4.500 5 2.500 7 3.500 8.500C4.500 10 6.500 9.500 8 8L10 5.500C12 3.500 14.500 6 13 8.200C12 9.500 10.500 9.200 9.500 8.200" strokeWidth="1.700" />
      </svg>
      <p className="ml-[38px] flex-1 pt-px">Click to select, or click in empty space and drag to marquee select. Use Shift, Alt, and Ctrl for other options.</p>
      <div className="h-full w-px bg-[#2e2e2e]" />
      <svg className="mr-[5px] ml-[7px]" width="13" height="12" viewBox="0 0 13 12">
        <path d="M6.500 0L13 12H0Z" fill="#edc31b" />
        <path d="M6.500 4V8M6.500 9.300V11" stroke="#222" strokeWidth="1.600" />
      </svg>
    </footer>
  )
}

export default function App() {
  return (
    <div className="flex min-h-screen flex-col bg-[#151515] font-[Roboto,'Open_Sans',sans-serif]">
      <WindowChrome />
      <EffectsPanel />
      <div className="h-1 shrink-0" />
      <TimelinePanel />
      <div className="h-[2px] shrink-0" />
      <StatusBar />
      <div className="h-[2px] shrink-0 bg-[#d8d4d3]" />
    </div>
  )
}
